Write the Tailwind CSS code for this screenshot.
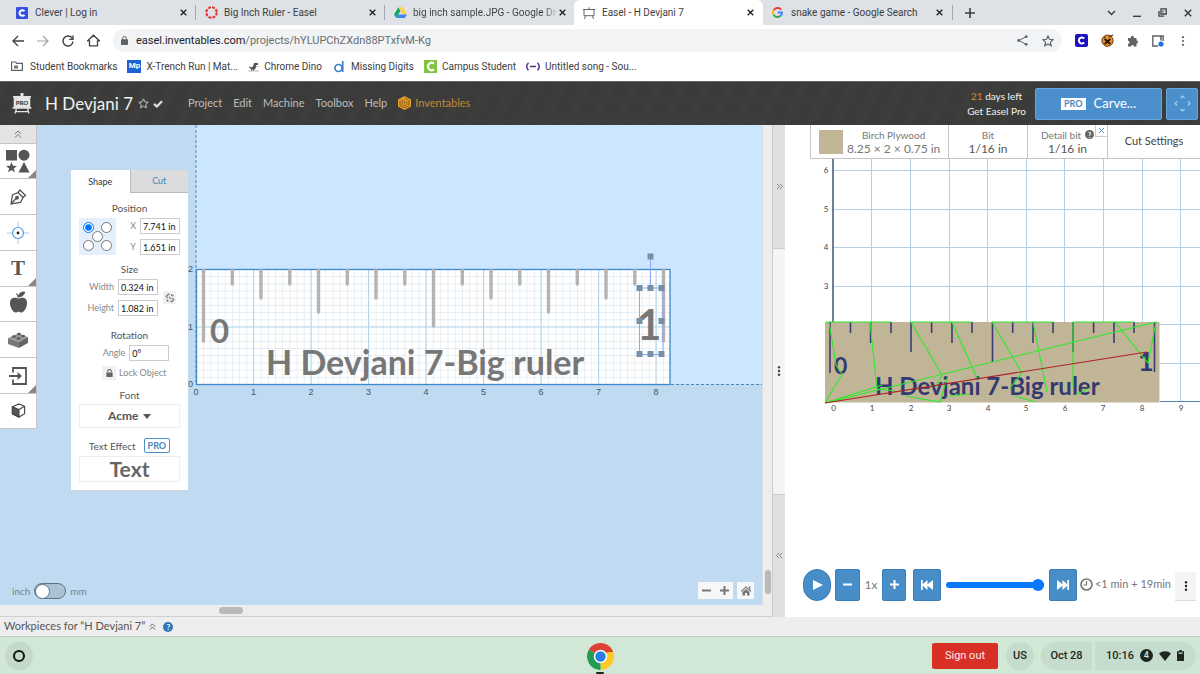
<!DOCTYPE html>
<html lang="en">
<head>
<meta charset="utf-8">
<title>Easel - H Devjani 7</title>
<script src="https://cdn.jsdelivr.net/npm/@tailwindcss/browser@4"></script>
</head>
<body class="flex h-screen flex-col overflow-hidden bg-white font-['Lato','Liberation_Sans',sans-serif] text-[#555]">

<!-- Browser tabs -->
<div class="flex h-[25px] shrink-0 items-stretch bg-[#dee1e6] pl-[6px] font-['Roboto',sans-serif] text-[10px] text-[#3c4043]">
  <div class="flex w-[189px] items-center gap-[7px] pr-2 pl-[10px]">
    <svg class="size-3 shrink-0" viewBox="0 0 12 12"><rect width="12" height="12" rx="1" fill="#3450df"/><path d="M8.5 4.2A2.8 2.8 0 1 0 8.5 7.8" fill="none" stroke="#fff" stroke-width="2"/></svg>
    <span class="flex-1 whitespace-nowrap">Clever | Log in</span>
    <button aria-label="Close tab"><svg class="size-[7px]" viewBox="0 0 7 7"><path d="M.7.7l5.6 5.6M6.3.7L.7 6.3" stroke="#202124" stroke-width="1.3"/></svg></button>
  </div>
  <div class="my-[5px] w-px bg-[#a3a7ad]"></div>
  <div class="flex w-[188px] items-center gap-[6px] pr-2 pl-[9px]">
    <svg class="size-[13px] shrink-0" viewBox="0 0 13 13"><circle cx="6.5" cy="6.5" r="5.2" fill="none" stroke="#e2382c" stroke-width="2.1" stroke-dasharray="2.9 1.18"/></svg>
    <span class="flex-1 whitespace-nowrap">Big Inch Ruler - Easel</span>
    <button aria-label="Close tab"><svg class="size-[7px]" viewBox="0 0 7 7"><path d="M.7.7l5.6 5.6M6.3.7L.7 6.3" stroke="#202124" stroke-width="1.3"/></svg></button>
  </div>
  <div class="my-[5px] w-px bg-[#a3a7ad]"></div>
  <div class="flex w-[189px] items-center gap-[6px] pr-2 pl-[9px]">
    <svg class="size-[13px] shrink-0" viewBox="0 0 13 12"><path d="M4.4.8L6.5 4.5 2.2 11.6 0 8z" fill="#16a765"/><path d="M4.4.8h4.2L13 8H8.7z" fill="#ffcf48"/><path d="M4.3 8H13l-2.1 3.6H2.2z" fill="#4285f4"/></svg>
    <span class="-mr-[5px] flex-1 bg-linear-to-r from-[#3c4043] from-90% to-[#dee1e6] bg-clip-text whitespace-nowrap text-transparent">big inch sample.JPG - Google Dr</span>
    <button aria-label="Close tab"><svg class="size-[7px]" viewBox="0 0 7 7"><path d="M.7.7l5.6 5.6M6.3.7L.7 6.3" stroke="#202124" stroke-width="1.3"/></svg></button>
  </div>
  <div class="flex w-[189px] items-center gap-[7px] rounded-t-md bg-white pr-[9px] pl-[9px]">
    <svg class="size-3 shrink-0" viewBox="0 0 12 12"><path d="M0 2.5h12M1 2.5v6.2h10V2.5M6 .3v2M2.5 8.7L1.5 12M9.5 8.7l1 3.3" fill="none" stroke="#666" stroke-width="1"/></svg>
    <span class="flex-1 whitespace-nowrap">Easel - H Devjani 7</span>
    <button aria-label="Close tab"><svg class="size-[7px]" viewBox="0 0 7 7"><path d="M.7.7l5.6 5.6M6.3.7L.7 6.3" stroke="#202124" stroke-width="1.3"/></svg></button>
  </div>
  <div class="flex w-[189px] items-center gap-2 pr-[9px] pl-[9px]">
    <svg class="size-[11px] shrink-0" viewBox="0 0 12 12" fill="none" stroke-width="2.2"><path d="M10 3A4.9 4.9 0 0 0 1.700 3.700" stroke="#ea4335"/><path d="M1.700 3.700a4.900 4.900 0 0 0 0 4.600" stroke="#fbbc05"/><path d="M1.700 8.300A4.900 4.900 0 0 0 9.300 9.600" stroke="#34a853"/><path d="M6.200 6h4.700a4.900 4.900 0 0 1-1.600 3.600" stroke="#4285f4"/></svg>
    <span class="flex-1 whitespace-nowrap">snake game - Google Search</span>
    <button aria-label="Close tab"><svg class="size-[7px]" viewBox="0 0 7 7"><path d="M.7.7l5.6 5.6M6.3.7L.7 6.3" stroke="#202124" stroke-width="1.3"/></svg></button>
  </div>
  <div class="my-[5px] w-px bg-[#a3a7ad]"></div>
  <button class="ml-3" aria-label="New tab"><svg class="size-[10px]" viewBox="0 0 10 10"><path d="M5 0v10M0 5h10" stroke="#3c4043" stroke-width="1.6"/></svg></button>
  <div class="ml-auto flex items-center gap-[17px] pr-2">
    <button aria-label="Search tabs"><svg class="h-2 w-[9px]" viewBox="0 0 9 8"><path d="M1 2l3.500 3.500L8 2" fill="none" stroke="#3c4043" stroke-width="1.500"/></svg></button>
    <button aria-label="Minimize"><svg class="size-2" viewBox="0 0 8 8"><path d="M0 7.300h8" stroke="#3c4043" stroke-width="1.400"/></svg></button>
    <button aria-label="Restore"><svg class="size-[9px]" viewBox="0 0 9 9" fill="none" stroke="#3c4043" stroke-width="1.300"><path d="M3 .8h5.200V6H3z"/><path d="M1 3v5.200h5.200M5 2.500v1.800"/></svg></button>
    <button aria-label="Close window"><svg class="size-2" viewBox="0 0 8 8"><path d="M.8.8l6.400 6.400M7.200.8L.8 7.200" stroke="#3c4043" stroke-width="1.600"/></svg></button>
  </div>
</div>

<!-- Address bar -->
<div class="flex h-[31px] shrink-0 items-center gap-[13px] bg-white pr-[15px] pl-3 text-[#5f6368]">
  <button aria-label="Back"><svg class="size-3" viewBox="0 0 12 12" fill="none" stroke="#3c4043" stroke-width="1.300"><path d="M12 6H1M6 1L1 6l5 5"/></svg></button>
  <button aria-label="Forward"><svg class="size-3" viewBox="0 0 12 12" fill="none" stroke="#a0a4a8" stroke-width="1.200"><path d="M0 6h11M6 1l5 5-5 5"/></svg></button>
  <button aria-label="Reload"><svg class="size-3" viewBox="0 0 12 12" fill="none" stroke="#3c4043" stroke-width="1.400"><path d="M10.300 3.400A5 5 0 1 0 11 6.600"/><path d="M11 .6v3.800H7.200"/></svg></button>
  <button aria-label="Home"><svg class="size-[13px]" viewBox="0 0 13 13" fill="none" stroke="#3c4043" stroke-width="1.300"><path d="M.7 6.800L6.500 1.200l5.800 5.600H10.500v5H2.500v-5z"/></svg></button>
  <div class="flex h-[23px] flex-1 items-center rounded-full bg-[#f1f3f4] pr-2 pl-2 font-['Roboto',sans-serif] text-[11px]">
    <svg class="h-[9px] w-[7px]" viewBox="0 0 7 9"><rect y="3.300" width="7" height="5.700" rx=".8" fill="#5f6368"/><path d="M1.700 4V2.300a1.800 1.800 0 0 1 3.600 0V4" fill="none" stroke="#5f6368"/></svg>
    <div class="ml-2 flex-1 pt-px whitespace-nowrap text-[#6a6e72]"><span class="text-[#202124]">easel.inventables.com</span>/projects/hYLUPChZXdn88PTxfvM-Kg</div>
    <button class="mr-[14px]" aria-label="Share"><svg class="size-[11px]" viewBox="0 0 11 11"><path d="M9 1.700L2 5.500l7 3.800" fill="none" stroke="#5f6368"/><g fill="#5f6368"><circle cx="9.200" cy="1.700" r="1.400"/><circle cx="1.700" cy="5.500" r="1.400"/><circle cx="9.200" cy="9.300" r="1.400"/></g></svg></button>
    <button aria-label="Bookmark"><svg class="size-3" viewBox="0 0 12 12"><path d="M6 1l1.500 3.300 3.600.4-2.700 2.400.8 3.600L6 8.900l-3.200 1.800.8-3.600L.9 4.700l3.600-.4z" fill="none" stroke="#5f6368" stroke-width="1.200"/></svg></button>
  </div>
  <div class="flex items-center gap-[13px]">
    <button aria-label="Clever"><svg class="size-[13px]" viewBox="0 0 13 13"><rect width="13" height="13" rx="2" fill="#1a10c4"/><path d="M9.200 4.600a3 3 0 1 0 0 3.800" fill="none" stroke="#fff" stroke-width="2"/></svg></button>
    <button aria-label="Cookie extension"><svg class="size-[13px]" viewBox="0 0 13 13"><circle cx="6.500" cy="6.700" r="5.600" fill="#e6942f" stroke="#5d3411"/><path d="M3.700 5l5.600 5M9.300 5l-5.600 5" stroke="#2a1708" stroke-width="1.900"/><path d="M8 3l4-2M3 3l1 1" stroke="#47270c" stroke-width="1.300"/></svg></button>
    <button aria-label="Extensions"><svg class="size-3" viewBox="0 0 12 12"><path d="M1 3h2.900a1.600 1.600 0 1 1 3 0H9.500v2.600a1.500 1.500 0 1 1 0 3V11.500H7a1.500 1.500 0 1 0-3 0H1V8.700a1.500 1.500 0 1 0 0-3z" fill="#5f6368"/></svg></button>
    <button aria-label="Side panel"><svg class="size-3" viewBox="0 0 12 12"><path d="M6 11H.8V1h10.400v5" fill="none" stroke="#5f6368" stroke-width="1.400"/><path d="M9 1v4.500" stroke="#5f6368" stroke-width="1.600"/><circle cx="9" cy="9" r="2.600" fill="#1a73e8"/></svg></button>
    <button class="ml-1" aria-label="Menu"><svg class="h-[10px] w-[4px]" viewBox="0 0 4 10" fill="#5f6368"><circle cx="2" cy="1.200" r="1.100"/><circle cx="2" cy="5" r="1.100"/><circle cx="2" cy="8.800" r="1.100"/></svg></button>
  </div>
</div>

<!-- Bookmarks -->
<nav aria-label="Bookmarks" class="flex h-[26px] shrink-0 items-center gap-[10px] border-b border-[#666] bg-white pb-[5px] pl-[11px] font-['Roboto',sans-serif] text-[10px] whitespace-nowrap text-[#3c4043]">
  <a href="#" class="flex items-center gap-[7px]"><svg class="h-[10px] w-3" viewBox="0 0 12 10"><path d="M.6 1h4l1 1.300h5.800v7H.6z" fill="none" stroke="#5f6368" stroke-width="1.200"/><path d="M3 4.500h4v3H3z" fill="#777"/></svg>Student Bookmarks</a>
  <a href="#" class="flex items-center gap-[5px]"><span class="flex h-[13px] w-[14px] items-center justify-center bg-[#1d63d8] text-[8px] font-bold text-white">Mp</span>X-Trench Run | Mat...</a>
  <a href="#" class="flex items-center gap-[5px]"><svg class="h-3 w-[11px]" viewBox="0 0 11 12"><path d="M6 3h4v2H8v1.500h1.500V7H8L7 9.500H6V11H5V9.500H4V11H3V9L1 7.500V6l1.500 1.500L5 6.500z" fill="#555"/><path d="M0 11h11" stroke="#bbb"/></svg>Chrome Dino</a>
  <a href="#" class="ml-[2px] flex items-center gap-[7px]"><svg class="h-[13px] w-[10px]" viewBox="0 0 10 13"><circle cx="4.500" cy="8" r="3.500" fill="none" stroke="#3b7fc9" stroke-width="1.700"/><path d="M8.700 1v11" stroke="#3b7fc9" stroke-width="1.700"/></svg>Missing Digits</a>
  <a href="#" class="flex items-center gap-[5px]"><svg class="size-[13px]" viewBox="0 0 13 13"><rect width="13" height="13" fill="#82c341"/><path d="M10 3.600a3.700 3.700 0 1 0 0 5.800" fill="none" stroke="#fff" stroke-width="2"/></svg>Campus Student</a>
  <a href="#" class="flex items-center gap-[5px]"><svg class="h-[9px] w-[14px]" viewBox="0 0 14 9" fill="none" stroke="#5b2a91" stroke-width="1.500"><path d="M2.500.7a5 5 0 0 0 0 7.600M11.500.7a5 5 0 0 1 0 7.600M4 4.500h6"/></svg>Untitled song - Sou...</a>
</nav>

<!-- Application header -->
<header class="flex h-[43px] shrink-0 items-center bg-[#3b3c3a] bg-[repeating-linear-gradient(115deg,#ffffff03_0_8px,transparent_8px_22px)] pl-3 text-[#bcbcbc]">
  <svg class="h-[21px] w-5" viewBox="0 0 20 21"><path d="M8.500 0h3v3h-3zM1 3h18v1.500h-.7v9.500h1V15.800H.7V14h1V4.500H1z" fill="#e4e4e2"/><path d="M4.500 15.500L3 20.500M15.500 15.500l1.500 5M3.500 18.700h13" stroke="#e4e4e2" stroke-width="1.300"/><text x="10" y="11.500" text-anchor="middle" font-family="Lato" font-size="6" font-weight="900" fill="#3b3c3a">PRO</text></svg>
  <h1 class="ml-[13px] text-[17px] whitespace-nowrap text-[#f1f1f1]">H Devjani 7</h1>
  <button class="ml-[5px]" aria-label="Favorite"><svg class="size-[11px]" viewBox="0 0 12 12"><path d="M6 1l1.500 3.300 3.600.4-2.700 2.400.8 3.600L6 8.900l-3.200 1.800.8-3.600L.9 4.700l3.600-.4z" fill="none" stroke="#ccc"/></svg></button>
  <svg class="ml-1 h-2 w-[10px]" viewBox="0 0 10 8"><path d="M1 3.800l2.800 2.700L9 1.300" fill="none" stroke="#ddd" stroke-width="2.300"/></svg>
  <nav class="ml-[25px] flex items-center gap-[11px] pb-px text-[11px] whitespace-nowrap">
    <a href="#">Project</a><a href="#">Edit</a><a href="#">Machine</a><a href="#">Toolbox</a><a href="#">Help</a>
    <a href="#" class="flex items-center gap-1 text-[#c0873a]"><svg class="h-[14px] w-[13px]" viewBox="0 0 13 14"><path d="M6.500 0L13 3.500v7L6.500 14 0 10.500v-7z" fill="#e79f24"/><path d="M2 4.500v5l4.500 2.500L11 9.500v-5L6.500 2M4.200 3.500v5l2.300 1.300 2.300-1.300v-3M6.500 4.500v3" fill="none" stroke="#86591b" stroke-width="1"/></svg>Inventables</a>
  </nav>
  <a href="#" class="ml-auto pt-px text-right text-[10px] leading-[15px] whitespace-nowrap text-[#f0f0f0]"><span class="block pr-1"><span class="text-[#d38b35]">21</span> days left</span>Get Easel Pro</a>
  <button class="ml-[9px] flex h-8 w-[127px] items-center justify-center gap-2 rounded-xs border border-[#65a7dc] bg-[#4b90cd] text-[13px] text-white"><span class="bg-white px-[3px] text-[9px] leading-[12px] font-bold text-[#4b86b8]">PRO</span>Carve...</button>
  <button aria-label="Move machine" class="mr-[2px] ml-1 flex h-8 w-8 items-center justify-center rounded-xs border border-[#65a7dc] bg-[#4b90cd]"><svg class="size-[17px]" viewBox="0 0 17 17" fill="none" stroke="#a9cdea" stroke-width="1.200"><path d="M6.500 3l2-2 2 2M6.500 14l2 2 2-2M3 6.500l-2 2 2 2M14 6.500l2 2-2 2"/></svg></button>
</header>

<main class="grid min-h-0 flex-1 grid-cols-[minmax(0,772fr)_13px_minmax(0,415fr)]">

  <!-- Design canvas -->
  <section aria-label="Design" class="flex min-w-0 flex-col bg-[#ecedef]">
    <div class="flex min-h-0 flex-1">
      <div class="relative min-w-0 flex-1 overflow-hidden bg-[#bfdaf1]">
        <svg class="absolute inset-0 h-full w-full" font-family="Lato">
          <defs>
            <pattern id="fine" x="196" y="269" width="7.1875" height="7.1875" patternUnits="userSpaceOnUse"><path d="M0 0H7.200M0 0V7.200" stroke="#dbe8f0" stroke-width="1.300" fill="none"/></pattern>
          </defs>
          <g transform="translate(0,-125)">
            <rect x="196" y="125" width="100%" height="259" fill="#cce6ff"/>
            <path d="M196 384.500H1400M196 125V384" stroke="#4b87bd" stroke-dasharray="3 2"/>
            <rect x="196" y="269.500" width="474" height="115" fill="#fff"/>
            <rect x="196" y="269.500" width="474" height="115" fill="url(#fine)"/>
            <path d="M253.500 270v114M311 270v114M368.500 270v114M426 270v114M483.500 270v114M541 270v114M598.500 270v114M656 270v114M196 327H670" stroke="#b4d6ec"/>
            <rect x="196.500" y="269.500" width="473.500" height="115" fill="none" stroke="#3d88c8" stroke-width="1.300"/>
            <path d="M203.500 270V341M232.300 270V284M261 270V298M289.800 270V284M318.500 270V312M347.300 270V284M376 270V298M404.800 270V284M433.500 270V326M462.300 270V284M491 270V298M519.800 270V284M548.500 270V312M577.300 270V284M606 270V298M634.800 270V284M663.500 270V341" stroke="#b3b3b3" stroke-width="3.400" stroke-linecap="round"/>
            <g fill="#777" font-weight="700">
              <text x="210" y="343" font-size="33">0</text>
              <text x="266" y="375" font-size="34">H Devjani 7-Big ruler</text>
              <text x="637" y="340" font-size="42">1</text>
            </g>
            <path d="M639.500 288H663V354.500H639.500zM650.500 257V288" fill="none" stroke="#8ea6f5"/>
            <path d="M636.500 285h6v6h-6zM647.500 285h6v6h-6zM658.500 285h6v6h-6zM636.500 318h6v6h-6zM658.500 318h6v6h-6zM636.500 351h6v6h-6zM647.500 351h6v6h-6zM658.500 351h6v6h-6zM647.500 253.500h6v6h-6z" fill="#7890a6"/>
            <g font-size="9" fill="#40566b" text-anchor="middle" font-family="Liberation Sans">
              <text x="196" y="395">0</text><text x="253.500" y="395">1</text><text x="311" y="395">2</text><text x="368.500" y="395">3</text><text x="426" y="395">4</text><text x="483.500" y="395">5</text><text x="541" y="395">6</text><text x="598.500" y="395">7</text><text x="656" y="395">8</text>
              <text x="190.500" y="272">2</text><text x="190.500" y="330">1</text><text x="190.500" y="387">0</text>
            </g>
          </g>
        </svg>

        <!-- Tool column -->
        <div class="absolute top-0 left-0 flex w-[37px] flex-col divide-y divide-[#c6c6c6] border-r border-b border-[#c6c6c6] bg-white">
          <button aria-label="Collapse tools" class="flex h-[19px] items-center justify-center bg-[#e4e4e4]"><svg class="size-2" viewBox="0 0 8 8" fill="none" stroke="#777"><path d="M1 4l3-3 3 3M1 7.500l3-3 3 3"/></svg></button>
          <button aria-label="Shapes" class="relative flex h-[35px] items-center justify-center"><svg class="size-6" viewBox="0 0 24 24" fill="#555"><path d="M0 1h11v10.500H0zM18 13l5.500 10.500h-11zM5.500 13l1.500 3.800 4 .2-3.200 2.400 1.200 4-3.500-2.300L2 23.400l1.200-4L0 17l4-.2z"/><circle cx="18" cy="6.200" r="5.500"/></svg><span class="absolute right-0 bottom-0 border-[4px] border-transparent border-r-[#888] border-b-[#888]"></span></button>
          <button aria-label="Pen" class="flex h-9 items-center justify-center"><svg class="size-[18px]" viewBox="0 0 18 18" fill="none" stroke="#555" stroke-width="1.300"><path d="M2 16l1.500-9L9 4.500l5 5-2.500 5zM9 4.500L11 2l5.500 5.500-2.500 2M2 16l5-5.500"/><circle cx="8" cy="9.700" r="1.300" fill="#555"/></svg></button>
          <button aria-label="Drill point" class="flex h-9 items-center justify-center"><svg class="size-[22px]" viewBox="0 0 22 22"><path d="M11 0v22M0 11h22" stroke="#a9c9f1"/><circle cx="11" cy="11" r="5.500" fill="#fff" stroke="#589be0" stroke-width="1.200"/><circle cx="11" cy="11" r="1.400" fill="#222"/></svg></button>
          <button aria-label="Text" class="relative flex h-9 items-center justify-center font-['Liberation_Serif',serif] text-[21px] font-bold text-[#555]">T<span class="absolute right-0 bottom-0 border-[4px] border-transparent border-r-[#888] border-b-[#888]"></span></button>
          <button aria-label="Icons" class="flex h-[35px] items-center justify-center pb-[5px]"><svg class="h-[22px] w-[19px]" viewBox="0 0 20 23" fill="#555"><path d="M10 8c2-1.500 9-2.500 9 4.500 0 5-3.500 10-6 10-1.200 0-2-.8-3-.8s-1.800.8-3 .8c-2.500 0-6-5-6-10C1 5.500 8 6.500 10 8z"/><path d="M10 6c0-3.500 3-5.500 6.500-5C16 4 14 6 10 6zM9.800 7.500C10 5 9 3.500 7.500 2.500" stroke="#555" stroke-width="1"/></svg></button>
          <button aria-label="Apps" class="flex h-9 items-center justify-center"><svg class="h-4 w-5" viewBox="0 0 20 16"><path d="M0 6l10-4.500L20 5l-9 5z" fill="#999"/><path d="M0 6l11 4v6L0 12z" fill="#777"/><path d="M20 5l-9 5v6l9-5z" fill="#666"/><g fill="#5c5c5c"><ellipse cx="6" cy="4.500" rx="2" ry="1.200"/><ellipse cx="11" cy="2" rx="2" ry="1.200"/><ellipse cx="10.500" cy="6.500" rx="2" ry="1.200"/><ellipse cx="15" cy="4" rx="2" ry="1.200"/></g></svg></button>
          <button aria-label="Import" class="relative flex h-9 items-center justify-center"><svg class="size-[18px]" viewBox="0 0 18 18" fill="none" stroke="#555" stroke-width="1.800"><path d="M4 5.500V1h13v16H4v-4.500M0 9h11"/><path d="M8.500 5l4.500 4-4.500 4z" fill="#555" stroke="none"/></svg><span class="absolute right-0 bottom-0 border-[4px] border-transparent border-r-[#888] border-b-[#888]"></span></button>
          <button aria-label="3D view" class="flex h-[34px] items-center justify-center pb-[2px]"><svg class="h-[15px] w-[15px]" viewBox="0 0 15 16" fill="none" stroke="#444" stroke-width="1.200"><path d="M1 4l7-3 6 2.500v8L8 15l-7-3.500z"/><path d="M1 4l7 3v8l-7-3.500z" fill="#555"/><path d="M8 7l6-3.500"/></svg></button>
        </div>

        <!-- Shape properties -->
        <form class="absolute top-[45px] left-[71px] w-[117px] border-b border-[#d5d5d5] bg-white pb-2 text-center text-[10px] leading-[14px]">
          <div class="grid grid-cols-2 text-[9px]">
            <button type="button" class="h-[23px] text-[#333]">Shape</button>
            <button type="button" class="h-[23px] border-b border-l border-[#bbb] bg-[#dcdcdc] text-[#4684bc]">Cut</button>
          </div>
          <h2 class="mt-2">Position</h2>
          <div class="mt-[3px] flex justify-between pr-2 pl-2">
            <div class="relative grid h-[37px] w-[37px] grid-cols-2 place-items-center bg-[#e3effa]">
              <input type="radio" name="anchor" aria-label="Top left" checked class="size-[11px]">
              <input type="radio" name="anchor" aria-label="Top right" class="size-[11px]">
              <input type="radio" name="anchor" aria-label="Bottom left" class="size-[11px]">
              <input type="radio" name="anchor" aria-label="Bottom right" class="size-[11px]">
              <input type="radio" name="anchor" aria-label="Center" class="absolute top-[13px] left-[13px] size-[11px]">
            </div>
            <div class="flex flex-col justify-between text-[9px] text-[#888]">
              <div class="flex items-center gap-1"><label for="px">X</label><input id="px" value="7.741 in" class="ml-auto h-4 w-10 border border-[#ccc] px-[2px] text-[9px] text-[#111]"></div>
              <div class="flex items-center gap-1"><label for="py">Y</label><input id="py" value="1.651 in" class="ml-auto h-4 w-10 border border-[#ccc] px-[2px] text-[9px] text-[#111]"></div>
            </div>
          </div>
          <h2 class="mt-[7px]">Size</h2>
          <div class="mt-[3px] flex items-center justify-between pr-3 pl-4 text-[9px] text-[#888]">
            <div class="flex flex-col gap-[5px]">
              <div class="flex items-center gap-1"><label for="sw" class="w-[27px] text-right">Width</label><input id="sw" value="0.324 in" class="h-4 w-10 border border-[#ccc] px-[2px] text-[9px] text-[#111]"></div>
              <div class="flex items-center gap-1"><label for="sh" class="w-[27px] text-right">Height</label><input id="sh" value="1.082 in" class="h-4 w-10 border border-[#ccc] px-[2px] text-[9px] text-[#111]"></div>
            </div>
            <button type="button" aria-label="Link proportions" class="flex size-[13px] items-center justify-center bg-[#f1f1f1]"><svg class="size-[10px]" viewBox="0 0 9 9" fill="none" stroke="#777"><path d="M4 2L3 1 1 3l1.500 1.500M5 7l1 1 2-2-1.500-1.500M3.500 3.500l2 2M6 1v1.500h2M1 6.500h1.500V8"/></svg></button>
          </div>
          <h2 class="mt-3">Rotation</h2>
          <div class="mt-[3px] flex items-center justify-center gap-1 pl-[13px] text-[9px] text-[#888]"><label for="ang">Angle</label><input id="ang" value="0°" class="h-4 w-10 border border-[#ccc] px-[2px] text-[9px] text-[#111]"></div>
          <button type="button" class="mt-[5px] ml-[31px] flex items-center gap-[3px] text-[9px] text-[#888]"><span class="flex size-[14px] items-center justify-center bg-[#f1f1f1]"><svg class="h-2 w-[7px]" viewBox="0 0 7 9"><rect y="4" width="7" height="5" fill="#666"/><path d="M1.500 4V2.500a2 2 0 0 1 4 0V4" fill="none" stroke="#666" stroke-width="1.200"/></svg></span>Lock Object</button>
          <div class="mt-2"><label for="font">Font</label></div>
          <div class="mx-2 mt-[2px] flex h-6 items-center justify-center gap-1 border border-[#eee]">
            <select id="font" class="appearance-none text-[12px] font-bold text-[#555]"><option>Acme</option></select>
            <svg class="h-[5px] w-2" viewBox="0 0 8 5"><path d="M0 0h8L4 5z" fill="#555"/></svg>
          </div>
          <div class="mt-[10px] flex items-center justify-center gap-2"><span>Text Effect</span><span class="rounded-xs border border-[#4a90cc] px-[3px] text-[9px] leading-[13px] font-bold text-[#4a86b8]">PRO</span></div>
          <button type="button" class="mx-2 mt-[3px] block h-[26px] w-[101px] border border-[#eee] text-[21px] leading-[24px] font-bold text-[#666]">Text</button>
        </form>

        <!-- Units -->
        <label class="absolute bottom-[6px] left-3 flex items-center gap-[4px] text-[10px] text-[#6f8496]">inch
          <input type="checkbox" class="peer sr-only" aria-label="Use millimetres">
          <span class="flex h-4 w-8 items-center rounded-full border border-[#5d7486] bg-[#a9c2d5]"><span class="size-[15px] rounded-full border border-[#5d7486] bg-white"></span></span>mm</label>

        <!-- Zoom -->
        <div class="absolute right-[8px] bottom-[6px] flex gap-1">
          <div class="flex h-[17px] w-[35px] items-center justify-around bg-[#f7f7f7]">
            <button aria-label="Zoom out"><svg class="size-[9px]" viewBox="0 0 9 9"><path d="M0 4.500h9" stroke="#777" stroke-width="2"/></svg></button>
            <button aria-label="Zoom in"><svg class="size-[9px]" viewBox="0 0 9 9"><path d="M0 4.500h9M4.500 0v9" stroke="#777" stroke-width="2"/></svg></button>
          </div>
          <button aria-label="Fit view" class="flex h-[17px] w-[17px] items-center justify-center bg-[#f7f7f7]"><svg class="size-[10px]" viewBox="0 0 10 10"><path d="M0 5.500L5 1l5 4.500M7.500 1h1.300v2.500" fill="none" stroke="#777" stroke-width="1.200"/><path d="M5 3l3.500 3v3.500H6V7H4v2.500H1.500V6z" fill="#777"/></svg></button>
        </div>
      </div>
      <div class="flex w-[10px] flex-col items-center justify-end border-l border-[#dcdfe3] pb-[11px]"><div class="h-6 w-[6px] rounded-full bg-[#b9b9b9]"></div></div>
    </div>
    <div class="flex h-3 items-center border-b border-[#d0d0d0] pl-[219px]"><div class="h-[7px] w-6 rounded-full bg-[#b9b9b9]"></div></div>
  </section>

  <!-- Pane divider -->
  <div class="flex flex-col border-l border-[#ccc] text-[#777]">
    <button aria-label="Expand design" class="flex flex-1 items-center justify-center border-b border-[#ccc] bg-[#e0e0e0]"><svg class="size-[7px]" viewBox="0 0 8 8" fill="none" stroke="#777"><path d="M1 1l3 3-3 3M4.500 1l3 3-3 3"/></svg></button>
    <div class="flex flex-2 items-center justify-center bg-[#f4f4f4]"><svg class="h-[10px] w-1" viewBox="0 0 4 10" fill="#444"><circle cx="2" cy="1.300" r="1.200"/><circle cx="2" cy="5" r="1.200"/><circle cx="2" cy="8.700" r="1.200"/></svg></div>
    <button aria-label="Expand preview" class="flex flex-1 items-center justify-center border-t border-[#ccc] bg-[#e0e0e0]"><svg class="size-[7px]" viewBox="0 0 8 8" fill="none" stroke="#777"><path d="M7 1L4 4l3 3M3.500 1l-3 3 3 3"/></svg></button>
  </div>

  <!-- Preview -->
  <section aria-label="Preview" class="flex min-w-0 flex-col bg-white">
    <div class="ml-[25px] flex h-[34px] shrink-0 divide-x divide-[#c4c4c4] border-b border-l border-[#c4c4c4] text-[10px] leading-[14px] whitespace-nowrap text-[#777]">
      <button class="flex w-[138px] items-center gap-1 pl-2"><span class="size-6 bg-[#c2b697]"></span><span class="text-center">Birch Plywood<span class="block text-[12px]">8.25 × 2 × 0.75 in</span></span></button>
      <button class="w-[79px]">Bit<span class="block text-[12px] text-[#555]">1/16 in</span></button>
      <div class="relative flex w-20"><button class="w-full"><span class="flex items-center justify-center gap-1">Detail bit <span class="flex size-[9px] items-center justify-center rounded-full bg-[#666] text-[7px] font-bold text-white">?</span></span><span class="block text-[12px] text-[#555]">1/16 in</span></button><button aria-label="Remove detail bit" class="absolute top-0 right-0 flex size-3 items-center justify-center border-b border-l border-[#ccc]"><svg class="size-[5px]" viewBox="0 0 5 5"><path d="M0 0l5 5M5 0L0 5" stroke="#4b90cd"/></svg></button></div>
      <button class="flex-1 pb-px text-[11px] text-[#444]">Cut Settings</button>
    </div>
    <svg class="min-h-0 w-full flex-1" font-family="Lato">
      <g transform="translate(-785,-159)">
        <path d="M871.500 159V402M910.500 159V402M949.500 159V402M987.500 159V402M1026.500 159V402M1064.500 159V402M1103.500 159V402M1142.500 159V402M1180.500 159V402M833 170.500H1400M833 209.500H1400M833 247.500H1400M833 286.500H1400M833 324.500H1400M833 363.500H1400" stroke="#b5cfe6" stroke-width="1"/>
        <path d="M833 159V324" stroke="#223f5c" stroke-width="1.300"/><path d="M1160 401.500H1400" stroke="#5484b3"/>
        <rect x="825" y="322" width="334.500" height="80.500" fill="#c0b597"/>
        <path d="M830 322V373M850.500 322V333M870.600 322V343M891 322V333M911 322V352M931.600 322V333M952 322V343M972 322V333M992.500 322V362M1012.700 322V333M1033 322V343M1053 322V333M1073 322V352M1093.600 322V333M1114 322V343M1134 322V333M1154.500 322V372" stroke="#3a3d72" stroke-width="1.600"/>
        <g font-weight="700" fill="#343970"><text x="834" y="374" font-size="23">0</text><text x="875" y="395" font-size="24">H Devjani 7-Big ruler</text><text x="1138" y="371" font-size="27">1</text></g>
        <path d="M826 322H891M910 322H972M992 322H1053M1073 322H1134M829 322L836 365 842 374 825 403M870 322L877 389 895 391M911 322L942 375 935 388M952 322L978 380M992 322L1022 373 1010 388M1033 322L1047 392M1073 322V388M1115 322L1148 363 1156 322 825 403M825 403L882 385M905 396L940 402 947 378M950 396L970 394M1015 396L1035 402M1075 395L1090 388" fill="none" stroke="#2bea2b" stroke-width="1.100"/>
        <path d="M825 403L1147 352" stroke="#ad2222" stroke-width="1.200"/>
        <g font-size="8" fill="#444" text-anchor="middle">
          <text x="826" y="173">6</text><text x="826" y="212">5</text><text x="826" y="250">4</text><text x="826" y="289">3</text>
          <text x="833.500" y="411">0</text><text x="872" y="411">1</text><text x="911" y="411">2</text><text x="949" y="411">3</text><text x="988" y="411">4</text><text x="1026" y="411">5</text><text x="1065" y="411">6</text><text x="1103" y="411">7</text><text x="1142" y="411">8</text><text x="1181" y="411">9</text>
        </g>
      </g>
    </svg>
    <div class="flex shrink-0 items-center pr-1 pb-4 pl-[18px] whitespace-nowrap text-[#777]">
      <button aria-label="Play" class="flex h-8 w-7 items-center justify-center rounded-full border border-[#3a7db8] bg-[#478dc8]"><svg class="ml-[2px] size-[10px]" viewBox="0 0 10 10"><path d="M0 0l10 5-10 5z" fill="#fff"/></svg></button>
      <button aria-label="Slower" class="ml-1 flex h-8 w-[25px] items-center justify-center rounded-xs border border-[#3a7db8] bg-[#478dc8]"><svg class="size-[9px]" viewBox="0 0 9 9"><path d="M0 4.500h9" stroke="#fff" stroke-width="2"/></svg></button>
      <span class="w-[22px] text-center text-[12px]">1x</span>
      <button aria-label="Faster" class="flex h-8 w-6 items-center justify-center rounded-xs border border-[#3a7db8] bg-[#478dc8]"><svg class="size-[9px]" viewBox="0 0 9 9"><path d="M0 4.500h9M4.500 0v9" stroke="#fff" stroke-width="2"/></svg></button>
      <button aria-label="To start" class="ml-[7px] flex h-8 w-7 items-center justify-center rounded-xs border border-[#3a7db8] bg-[#478dc8]"><svg class="h-[10px] w-3" viewBox="0 0 12 10"><path d="M0 0h1.700v4.300L6.500 0v4.300L12 0v10L6.500 5.700V10L1.700 5.700V10H0z" fill="#fff"/></svg></button>
      <input type="range" aria-label="Simulation progress" value="100" class="mx-[5px] h-4 w-0 min-w-0 flex-1 appearance-none bg-transparent [&::-webkit-slider-runnable-track]:h-[6px] [&::-webkit-slider-runnable-track]:rounded-full [&::-webkit-slider-runnable-track]:bg-[#0878ff] [&::-webkit-slider-thumb]:-mt-[3px] [&::-webkit-slider-thumb]:size-3 [&::-webkit-slider-thumb]:appearance-none [&::-webkit-slider-thumb]:rounded-full [&::-webkit-slider-thumb]:bg-[#0878ff]">
      <button aria-label="To end" class="flex h-8 w-7 items-center justify-center rounded-xs border border-[#3a7db8] bg-[#478dc8]"><svg class="h-[10px] w-3" viewBox="0 0 12 10"><path d="M12 0h-1.700v4.300L5.500 0v4.300L0 0v10l5.500-4.300V10l4.800-4.300V10H12z" fill="#fff"/></svg></button>
      <svg class="ml-[3px] size-[13px]" viewBox="0 0 13 13" fill="none" stroke="#777"><circle cx="6.500" cy="6.500" r="5.500" stroke-width="1.600"/><path d="M6.500 3v4h-3" stroke-width="1.200"/></svg>
      <span class="ml-[2px] text-[11px]">&lt;1 min + 19min</span>
      <button aria-label="More" class="mt-1 ml-1 flex h-[29px] w-[21px] items-center justify-center border-b border-[#ddd] bg-[#f4f4f4]"><svg class="h-[10px] w-1" viewBox="0 0 4 10" fill="#222"><circle cx="2" cy="1.300" r="1.200"/><circle cx="2" cy="5" r="1.200"/><circle cx="2" cy="8.700" r="1.200"/></svg></button>
    </div>
  </section>
</main>

<!-- Workpieces -->
<footer class="flex h-5 shrink-0 items-center border-b border-[#c5c9c6] bg-[#eee] pl-1 text-[11px] text-[#555]">
  <button class="flex items-center gap-1">Workpieces for “H Devjani 7” <svg class="size-[7px]" viewBox="0 0 8 8" fill="none" stroke="#555"><path d="M1 4l3-3 3 3M1 7.500l3-3 3 3"/></svg></button>
  <button aria-label="Help" class="ml-[7px] flex size-[10px] items-center justify-center rounded-full bg-[#2e77bd] text-[8px] font-bold text-white">?</button>
</footer>

<!-- System shelf -->
<div class="grid h-[37px] shrink-0 grid-cols-[1fr_auto_1fr] items-center bg-[#d1e8d6] font-['Roboto',sans-serif] text-[11px] font-medium text-[#1f2622]">
  <button aria-label="Launcher" class="ml-[5px] flex size-7 items-center justify-center rounded-full bg-[#c3d9ca]"><span class="size-3 rounded-full border-2 border-[#111]"></span></button>
  <button aria-label="Chrome" class="flex h-[37px] flex-col items-center justify-between pt-[6px]"><svg class="size-[27px]" viewBox="0 0 27 27"><path d="M13.500 13.500L1.800 6.800A13.500 13.500 0 0 1 25.200 6.800z" fill="#dd4132"/><path d="M13.500 13.500L25.200 6.800A13.500 13.500 0 0 1 13.500 27z" fill="#fdc922"/><path d="M13.500 13.500V27A13.500 13.500 0 0 1 1.800 6.800z" fill="#249b52"/><path d="M13.500 7H25.300L26 9H16z" fill="#dd4132"/><circle cx="13.500" cy="13.500" r="6.700" fill="#fff"/><circle cx="13.500" cy="13.500" r="5.200" fill="#297fe0"/></svg><span class="h-[2px] w-2 rounded-full bg-[#222]"></span></button>
  <div class="flex items-center justify-end pr-1">
    <button class="mr-2 h-[26px] w-[66px] rounded-xs bg-[#d93025] pt-[2px] font-normal text-[#fbe9e7]">Sign out</button>
    <button class="mr-[7px] size-7 rounded-full bg-[#c6dccd] pt-[2px]">US</button>
    <button class="mr-[3px] h-7 w-[51px] rounded-l-full bg-[#c6dccd] pt-[2px]">Oct 28</button>
    <button class="flex h-7 w-[101px] items-center gap-[6px] rounded-r-full bg-[#c6dccd] pl-[11px]"><span class="pt-[2px]">10:16</span>
      <span class="flex size-[13px] items-center justify-center rounded-full bg-[#1f2622] text-[9px] text-[#d1e8d6]">4</span>
      <svg class="h-[10px] w-3" viewBox="0 0 12 10"><path d="M0 2.500a9 9 0 0 1 12 0L6 10z" fill="#1f2622"/></svg>
      <svg class="h-[11px] w-[7px]" viewBox="0 0 7 11"><path d="M2.300 0h2.400v1.200H7V11H0V1.200h2.300z" fill="#1f2622"/><path d="M1.500 2.500h4v1.300h-4z" fill="#c6dccd"/></svg></button>
  </div>
</div>
</body>
</html>
